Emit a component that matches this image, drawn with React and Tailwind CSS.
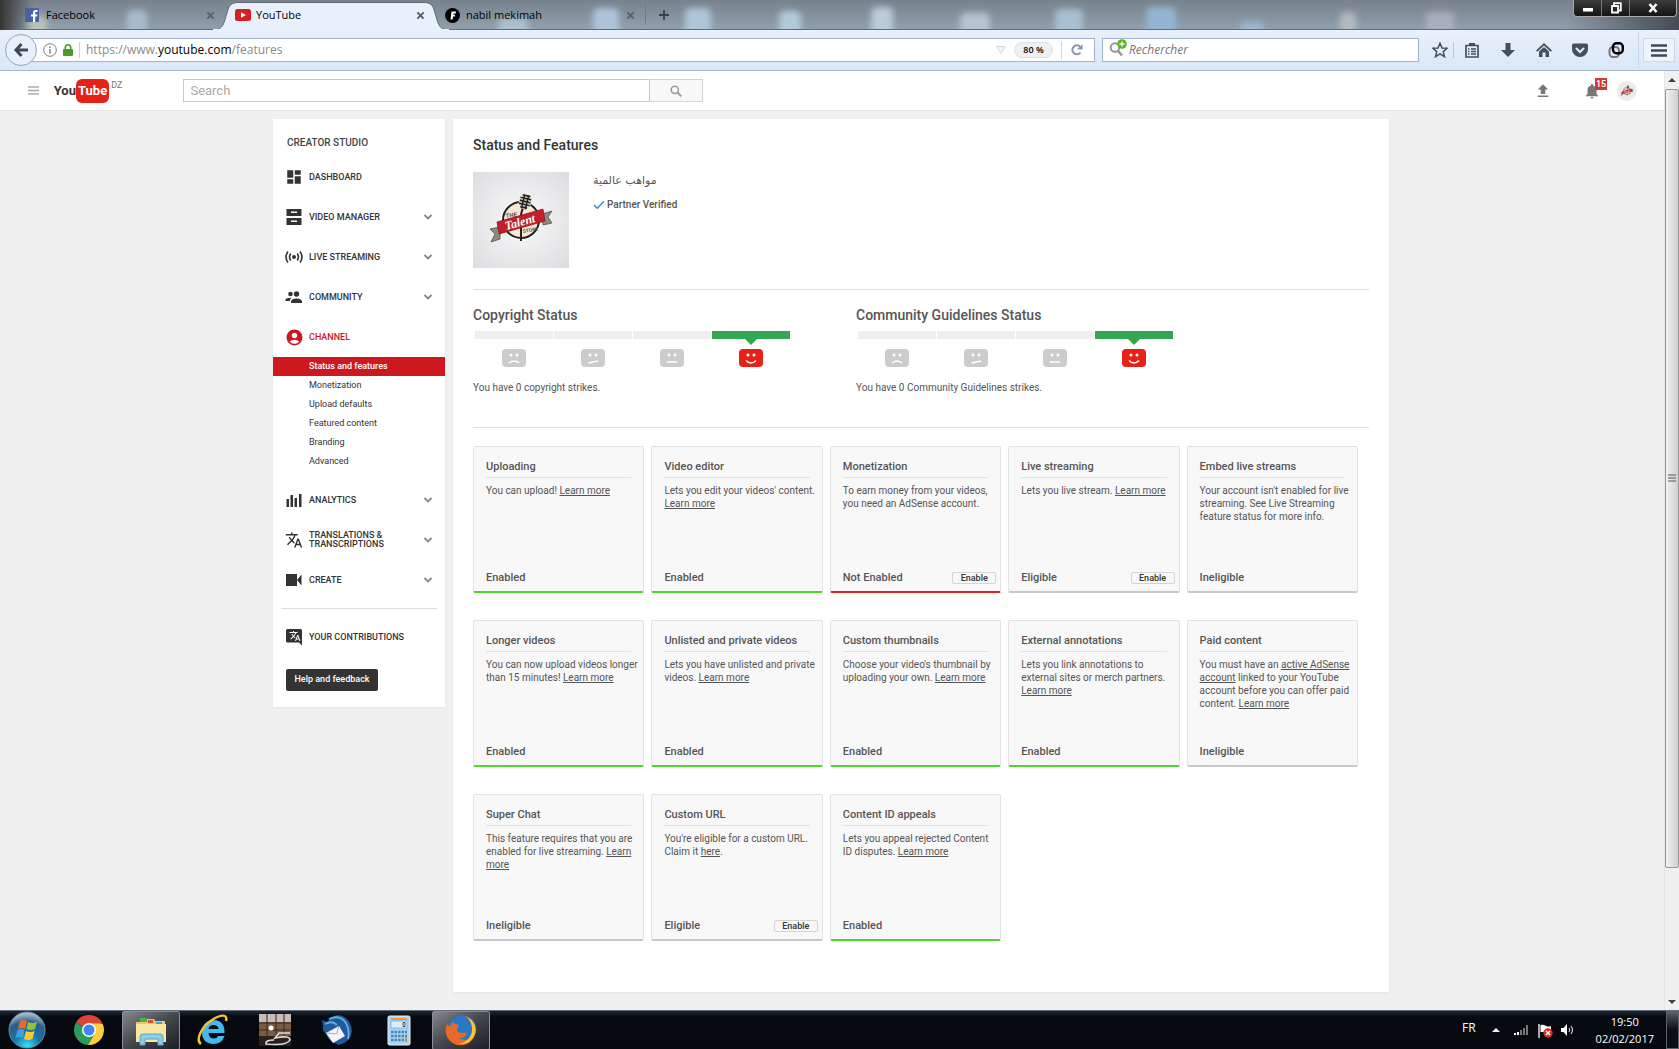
import { MdDashboard, MdPeople, MdAccountCircle, MdTranslate, MdFileUpload, MdNotifications } from 'react-icons/md'

const cards = [
  { title: 'Uploading', body: ['You can upload! ', ['Learn more']], status: 'Enabled' },
  { title: 'Video editor', body: ["Lets you edit your videos' content. ", ['Learn more']], status: 'Enabled' },
  { title: 'Monetization', body: ['To earn money from your videos, you need an AdSense account.'], status: 'Not Enabled', action: true },
  { title: 'Live streaming', body: ['Lets you live stream. ', ['Learn more']], status: 'Eligible', action: true },
  { title: 'Embed live streams', body: ["Your account isn't enabled for live streaming. See Live Streaming feature status for more info."], status: 'Ineligible' },
  { title: 'Longer videos', body: ['You can now upload videos longer than 15 minutes! ', ['Learn more']], status: 'Enabled' },
  { title: 'Unlisted and private videos', body: ['Lets you have unlisted and private videos. ', ['Learn more']], status: 'Enabled' },
  { title: 'Custom thumbnails', body: ["Choose your video's thumbnail by uploading your own. ", ['Learn more']], status: 'Enabled' },
  { title: 'External annotations', body: ['Lets you link annotations to external sites or merch partners. ', ['Learn more']], status: 'Enabled' },
  { title: 'Paid content', body: ['You must have an ', ['active AdSense account'], ' linked to your YouTube account before you can offer paid content. ', ['Learn more']], status: 'Ineligible' },
  { title: 'Super Chat', body: ['This feature requires that you are enabled for live streaming. ', ['Learn more']], status: 'Ineligible' },
  { title: 'Custom URL', body: ["You're eligible for a custom URL. Claim it ", ['here'], '.'], status: 'Eligible', action: true },
  { title: 'Content ID appeals', body: ['Lets you appeal rejected Content ID disputes. ', ['Learn more']], status: 'Enabled' },
]

const borderColors = {
  Enabled: 'border-b-[#4bd828]',
  'Not Enabled': 'border-b-[#e62117]',
  Eligible: 'border-b-[#c8c8c8]',
  Ineligible: 'border-b-[#c8c8c8]',
}

const subItems = ['Monetization', 'Upload defaults', 'Featured content', 'Branding', 'Advanced']

/* ---------- browser window ---------- */

// Desktop icons seen through the glass title bar
const glassSpots = [
  [36, 16, 22, '#b9c3bd'], [137, 10, 20, '#a9bccb'], [513, 18, 30, '#aebfd0'], [606, 8, 26, '#aec3da'], [698, 8, 26, '#aec6d8'],
  [790, 11, 22, '#b2cad8'], [882, 7, 22, '#bccbd9'], [975, 13, 30, '#b6c4d0'], [1069, 9, 28, '#a9bfd2'],
  [1161, 7, 30, '#92b5d2'], [1252, 22, 24, '#9db6d2'], [1348, 12, 16, '#b4b9bf'], [1440, 12, 28, '#a9afbd'],
]

function CloseX() {
  return (
    <svg viewBox="0 0 10 10" className="size-[9px]">
      <path d="M1.500 1.500L8.500 8.500M8.500 1.500L1.500 8.500" stroke="#56626e" strokeWidth="2.200" />
    </svg>
  )
}

function Tab({ icon, label, active }) {
  return (
    <div className="relative flex h-full w-[210px] items-center pr-2.5 pl-2.5">
      {active && (
        <svg viewBox="0 0 250 30" className="absolute top-0 -left-5 h-[30px] w-[250px]">
          <path d="M8 30C19 30 19 22 22 13C24 5 26 2.500 34 2.500H218C226 2.500 228 5 230 13C233 22 233 30 244 30Z" fill="#e8f1fb" stroke="#5f6c79" />
          <path d="M8 30H244" stroke="#e8f1fb" strokeWidth="2" />
        </svg>
      )}
      <span className="relative flex w-[21px] shrink-0">{icon}</span>
      <span className="relative">{label}</span>
      <button aria-label="Close tab" className="relative ml-auto"><CloseX /></button>
    </div>
  )
}

function TabStrip() {
  return (
    <div className="relative flex h-[30px] items-center overflow-hidden bg-linear-to-b from-[#77828d] to-[#92a0ad] pl-[15px] font-['Open_Sans',sans-serif] text-[11px] text-black">
      <svg className="absolute inset-0 h-full w-full">
        <defs>
          <filter id="glass" x="-50%" y="-50%" width="200%" height="200%"><feGaussianBlur stdDeviation="3" /></filter>
          <linearGradient id="edge"><stop offset="0" stopColor="#333" /><stop offset="1" stopColor="#333" stopOpacity="0" /></linearGradient>
        </defs>
        {glassSpots.map(([x, y, w, fill]) => (
          <rect key={x} x={x - w / 2} y={y} width={w} height="30" rx="6" fill={fill} filter="url(#glass)" />
        ))}
        <rect width="34" height="30" fill="url(#edge)" />
      </svg>
      <div className="absolute bottom-0 h-px w-full bg-[#5f6c79]" />
      <Tab
        label="Facebook"
        icon={
          <svg viewBox="0 0 14 14" className="size-3.5">
            <rect width="14" height="14" fill="#4862a3" />
            <path d="M8 14V8.500H6V6.500H8V5C8 3 9 2 11 2H12.500V4H11.200C10.400 4 10.200 4.400 10.200 5V6.500H12.400L12 8.500H10.200V14Z" fill="#fff" />
          </svg>
        }
      />
      <Tab
        active
        label="YouTube"
        icon={
          <svg viewBox="0 0 16 12" className="h-3 w-4">
            <rect width="16" height="12" rx="2.500" fill="#d5201f" />
            <path d="M6 3.300L11 6L6 8.700Z" fill="#fff" />
          </svg>
        }
      />
      <Tab
        label="nabil mekimah"
        icon={
          <svg viewBox="0 0 15 15" className="size-[15px]">
            <circle cx="7.500" cy="7.500" r="7.500" fill="#000" />
            <path d="M5.500 11.500L6.500 3.500H11L10.700 5.500H8.500L8.300 6.700H10.200L9.900 8.400H8L7.600 11.500Z" fill="#fff" />
          </svg>
        }
      />
      <div className="relative h-5 w-px bg-[#6f7b87]" />
      <button aria-label="New tab" className="relative ml-3">
        <svg viewBox="0 0 12 12" className="size-3"><path d="M6 1V11M1 6H11" stroke="#35424e" strokeWidth="1.800" /></svg>
      </button>
      <div className="absolute top-0 right-0 h-full w-28 bg-linear-to-r from-transparent to-[#444b52]" />
      <div className="relative mr-0.5 mb-auto ml-auto flex h-[17px] divide-x divide-[#777] overflow-hidden rounded-b border border-t-0 border-[#aaa] bg-linear-to-b from-[#3c3c3c] to-[#151515]">
        <button aria-label="Minimize" className="flex w-7 items-center justify-center">
          <svg viewBox="0 0 12 10" className="h-2.5 w-3"><rect x="1" y="5" width="10" height="3.500" fill="#fff" /></svg>
        </button>
        <button aria-label="Restore" className="flex w-7 items-center justify-center">
          <svg viewBox="0 0 12 12" className="size-3"><path d="M4 3V1.200H10.800V8.500H9M2 4H8V10.500H2Z" fill="none" stroke="#fff" strokeWidth="1.800" /></svg>
        </button>
        <button aria-label="Close" className="flex w-[46px] items-center justify-center">
          <svg viewBox="0 0 10 10" className="size-2.5"><path d="M1.500 1L8.500 9M8.500 1L1.500 9" stroke="#fff" strokeWidth="2.600" /></svg>
        </button>
      </div>
    </div>
  )
}

function ToolButton({ label, children }) {
  return (
    <button aria-label={label} className="flex w-9 justify-center">
      <svg viewBox="0 0 16 16" className="size-4">{children}</svg>
    </button>
  )
}

function NavBar() {
  return (
    <div className="relative flex h-[41px] items-center border-b border-[#a3b6cd] bg-linear-to-b from-[#e8f1fb] to-[#d9e7f8] pr-1 font-['Open_Sans',sans-serif] text-[12px]">
      <button aria-label="Back" className="relative z-10 ml-[5px] flex size-8 shrink-0 items-center justify-center rounded-full border border-[#93a8c0] bg-[#e7f0fb]">
        <svg viewBox="0 0 16 16" className="size-4"><path d="M8.500 2L3 8L8.500 14M3.500 8H15" fill="none" stroke="#404a55" strokeWidth="3" /></svg>
      </button>
      <div className="relative -ml-2 flex h-6 flex-1 items-center border border-[#9fb4cc] bg-white pl-[13px]">
        <svg viewBox="0 0 14 14" className="size-3.5">
          <circle cx="7" cy="7" r="6.300" fill="none" stroke="#7a7a7a" />
          <path d="M7 6V10.500M7 3.500V5" stroke="#7a7a7a" strokeWidth="1.400" />
        </svg>
        <svg viewBox="0 0 10 12" className="ml-1.5 h-3 w-2.5">
          <rect y="5" width="10" height="7" rx="1" fill="#4c9a2a" />
          <path d="M2.300 5.500V3.500A2.700 2.700 0 0 1 7.700 3.500V5.500" fill="none" stroke="#4c9a2a" strokeWidth="1.600" />
        </svg>
        <div className="mx-1.5 h-4 w-px bg-[#d0d0d0]" />
        <div className="text-[#8a8a8a]">https://www.<span className="text-black">youtube.com</span>/features</div>
        <input aria-label="Address" className="absolute inset-y-0 left-10 w-2/3 bg-transparent outline-none" />
        <svg viewBox="0 0 10 8" className="mr-2 ml-auto h-2 w-2.5"><path d="M.5 .5H9.500L5 7.500Z" fill="#f1f3f5" stroke="#d7dce1" /></svg>
        <button className="h-4 w-[39px] rounded-full border border-[#e2e2e2] bg-[#f0f0f0] text-[9px] leading-[14px] font-semibold text-black">80 %</button>
        <div className="mx-2 h-[18px] w-px bg-[#ccd5df]" />
        <button aria-label="Reload" className="mr-2.5">
          <svg viewBox="0 0 14 14" className="size-3.5">
            <path d="M10.500 9.500A4.500 4.500 0 1 1 10 3.600" fill="none" stroke="#8795a5" strokeWidth="2" />
            <path d="M12.500 1V6.500H7Z" fill="#8795a5" />
          </svg>
        </button>
      </div>
      <div className="ml-[7px] flex h-6 w-[317px] items-center border border-[#9fb4cc] bg-white pl-1.5">
        <svg viewBox="0 0 18 18" className="mb-1 size-[18px]">
          <circle cx="6" cy="8.500" r="4.300" fill="none" stroke="#989898" strokeWidth="2" />
          <path d="M9 12L13 16.500" stroke="#989898" strokeWidth="2.600" />
          <circle cx="13" cy="5" r="4.800" fill="#58b823" />
          <path d="M13 2.500V7.500M10.500 5H15.500" stroke="#fff" strokeWidth="1.300" />
        </svg>
        <input aria-label="Rechercher" placeholder="Rechercher" className="min-w-0 flex-1 pl-0.5 italic outline-none placeholder:text-[#777]" />
      </div>
      <div className="ml-2 flex items-center">
        <div className="flex w-[26px] justify-center">
          <ToolButton label="Bookmark">
            <path d="M8 1.200L10 6L15.200 6.300L11.200 9.600L12.500 14.700L8 11.900L3.500 14.700L4.800 9.600L.8 6.300L6 6Z" fill="none" stroke="#44505c" strokeWidth="1.500" />
          </ToolButton>
        </div>
        <div className="h-4 w-px bg-[#b9c9dc]" />
        <ToolButton label="Bookmarks list">
          <path d="M2 3.500H14V15H2Z" fill="none" stroke="#44505c" strokeWidth="1.700" />
          <path d="M5 1H11V4H5Z" fill="#44505c" />
          <path d="M4 7H5.500M7 7H12M4 9.500H5.500M7 9.500H12M4 12H5.500M7 12H12" stroke="#44505c" strokeWidth="1.300" />
        </ToolButton>
        <ToolButton label="Downloads">
          <path d="M5.500 1H10.500V8H15L8 15L1 8H5.500Z" fill="#44505c" />
        </ToolButton>
        <ToolButton label="Home">
          <path d="M8 1L0 8.500L1.300 9.800L8 3.600L14.700 9.800L16 8.500Z" fill="#44505c" />
          <path d="M3 9.500L8 5L13 9.500V15H9.500V10.500H6.500V15H3Z" fill="#44505c" />
        </ToolButton>
        <ToolButton label="Pocket">
          <path d="M1.500 1.500H14.500Q16 1.500 16 3V7.500A8 7.500 0 0 1 0 7.500V3Q0 1.500 1.500 1.500Z" fill="#44505c" />
          <path d="M4 6L8 10L12 6" fill="none" stroke="#e3edf9" strokeWidth="2" />
        </ToolButton>
        <ToolButton label="Container">
          <rect x="1.500" y="5" width="9.500" height="10" rx="3.500" fill="none" stroke="#777" strokeWidth="2" />
          <rect x="5" y="1.300" width="9.800" height="10" rx="3.500" fill="none" stroke="#000" strokeWidth="2.400" />
        </ToolButton>
        <div className="mx-1 h-9 w-px bg-[#c5d4e6]" />
        <button aria-label="Menu" className="flex h-6 w-8 items-center justify-center border border-[#ccd9e8] bg-[#edf4fc]">
          <svg viewBox="0 0 16 13" className="h-[13px] w-4"><path d="M0 1.500H16M0 6.500H16M0 11.500H16" stroke="#3d4954" strokeWidth="2.400" /></svg>
        </button>
      </div>
    </div>
  )
}

function ScrollBar() {
  return (
    <div className="flex w-[15px] flex-col items-center border-l border-[#e4e4e4] bg-[#f0f0f0]">
      <svg viewBox="0 0 8 4" className="my-[7px] h-1 w-2"><path d="M4 0L8 4H0Z" fill="#444" /></svg>
      <div className="flex w-full flex-[86] items-center justify-center rounded-xs border border-[#979797] bg-linear-to-r from-[#f3f3f3] to-[#cfcfcf]">
        <svg viewBox="0 0 8 8" className="size-2"><path d="M0 1H8M0 4H8M0 7H8" stroke="#555" /></svg>
      </div>
      <div className="flex-[14]" />
      <svg viewBox="0 0 8 4" className="my-1.5 h-1 w-2"><path d="M0 0H8L4 4Z" fill="#444" /></svg>
    </div>
  )
}

/* ---------- page ---------- */

function TalentArt() {
  return (
    <g>
      <circle cx="48" cy="48" r="20" fill="#fff" />
      <circle cx="48" cy="48" r="18" fill="#f8e7d2" stroke="#1f2523" strokeWidth="2" />
      <path d="M51 34Q48 40 48 44V69" fill="none" stroke="#1f2523" strokeWidth="2" />
      <g transform="rotate(14 52 30)">
        <rect x="46" y="22" width="12" height="15" rx="4" fill="#f8e7d2" />
        <path d="M50 23V37M54 23V37" stroke="#1f2523" strokeWidth="1.500" />
        <path d="M48 23.500H56M46.500 26.500H57.500M46.500 29.500H57.500M46.500 32.500H57.500M48.500 35.500H55.500" stroke="#1f2523" strokeWidth="1.700" />
      </g>
      <path d="M17 57L27 55V67L18 70L22 62Z" fill="#8d8b80" stroke="#444" strokeWidth=".7" />
      <path d="M69 42L79 39L75 45L79 51L70 53Z" fill="#8d8b80" stroke="#444" strokeWidth=".7" />
      <text x="33" y="46" transform="rotate(-8 33 46)" fontFamily="Roboto" fontWeight="700" fontSize="6" fill="#555">THE</text>
      <path d="M24 50L70 37L72 49L26 62Z" fill="#c1202b" stroke="#861018" strokeWidth=".7" />
      <text x="33" y="58" transform="rotate(-15 33 58)" fontFamily="Liberation Serif" fontStyle="italic" fontWeight="700" fontSize="12" fill="#fff">Talent</text>
      <text x="50" y="61" transform="rotate(-9 50 61)" fontFamily="Roboto" fontWeight="700" fontSize="5" fill="#555">STORE</text>
    </g>
  )
}

function Header() {
  return (
    <header className="flex h-10 items-center border-b border-[#e2e2e2] bg-white pr-[27px] pl-7">
      <button aria-label="Guide">
        <svg viewBox="0 0 11 9" className="h-[9px] w-[11px]"><path d="M0 1H11M0 4.500H11M0 8H11" stroke="#aaa" strokeWidth="1.300" /></svg>
      </button>
      <a href="#home" aria-label="YouTube home" className="ml-3 flex h-6 items-center font-bold">
        <span className="w-[25px] text-right text-[13px] leading-6 text-[#3a3130]">You</span>
        <span className="rounded-md bg-[#e62117] px-0.5 text-[13px] leading-6 text-white">Tube</span>
        <span className="mb-auto ml-0.5 text-[9px] leading-3 font-normal text-[#777]">DZ</span>
      </a>
      <form className="ml-[61px] flex h-[23px] w-[520px]">
        <input aria-label="Search" placeholder="Search" className="min-w-0 flex-1 border border-[#c8c8c8] bg-white px-1.5 text-[13px] outline-none placeholder:text-[#aaa]" />
        <button type="button" aria-label="Submit search" className="flex w-[53px] items-center justify-center border border-l-0 border-[#d3d3d3] bg-[#f8f8f8]">
          <svg viewBox="0 0 12 12" className="size-3"><circle cx="4.800" cy="4.800" r="3.600" fill="none" stroke="#999" strokeWidth="1.500" /><path d="M7.500 7.500L11.300 11.300" stroke="#999" strokeWidth="1.800" /></svg>
        </button>
      </form>
      <button aria-label="Upload" className="ml-auto text-[#777]"><MdFileUpload className="size-[18px]" /></button>
      <button aria-label="Notifications" className="relative ml-[31px] text-[#777]">
        <MdNotifications className="size-[18px]" />
        <span className="absolute -top-1 left-3 h-3 w-3 bg-[#cc3b34] text-center text-[9px] leading-3 font-medium text-white">15</span>
      </button>
      <button aria-label="Account" className="ml-4">
        <svg viewBox="0 0 96 96" className="size-5 rounded-full bg-[#ececec]"><TalentArt /></svg>
      </button>
    </header>
  )
}

function NavItem({ icon, label, arrow, active }) {
  return (
    <button className={`flex h-10 w-full items-center pr-2.5 pl-3 text-left text-[9px] leading-[9px] font-medium ${active ? 'text-[#cc181e]' : 'text-[#333]'}`}>
      <span className="flex w-6 shrink-0">{icon}</span>
      <span className="w-24">{label}</span>
      {arrow && (
        <svg viewBox="0 0 10 6" className="mr-0.5 ml-auto h-1.5 w-2.5"><path d="M1.500 1L5 4.500L8.500 1" fill="none" stroke="#888" strokeWidth="1.800" /></svg>
      )}
    </button>
  )
}

function Sidebar() {
  return (
    <nav className="w-[172px] shrink-0 self-start bg-white pt-4 pb-4 shadow-xs">
      <h2 className="mb-1.5 pl-3.5 text-[10px] leading-4 font-medium text-[#444]">CREATOR STUDIO</h2>
      <NavItem label="DASHBOARD" icon={<MdDashboard className="size-[18px]" />} />
      <NavItem
        arrow
        label="VIDEO MANAGER"
        icon={
          <svg viewBox="0 0 18 18" className="size-[18px]" fill="currentColor">
            <path d="M1.500 1H16.500V8H1.500ZM1.500 10H16.500V17H1.500Z" />
            <path d="M6 3.500V5H12V3.500M6 12.500V14H12V12.500" fill="#fff" />
          </svg>
        }
      />
      <NavItem
        arrow
        label="LIVE STREAMING"
        icon={
          <svg viewBox="0 0 18 18" className="size-[18px]" fill="none" stroke="currentColor" strokeWidth="1.600">
            <circle cx="9" cy="9" r="2" fill="currentColor" stroke="none" />
            <path d="M5.800 5.500Q3.300 9 5.800 12.500M12.200 5.500Q14.700 9 12.200 12.500M3 3.500Q-1 9 3 14.500M15 3.500Q19 9 15 14.500" />
          </svg>
        }
      />
      <NavItem
        arrow
        label="COMMUNITY"
        icon={
          <svg viewBox="0 0 18 18" className="size-[18px]" fill="currentColor">
            <circle cx="5.500" cy="6" r="2.300" />
            <circle cx="11.500" cy="6" r="2.700" />
            <path d="M6 15V13.500Q6.500 10.500 11.500 10.500Q16.500 10.500 17 13.500V15ZM.5 13V11.700Q1.500 9.500 6.500 9.800Q5 11 4.800 13Z" />
          </svg>
        }
      />
      <NavItem active label="CHANNEL" icon={<MdAccountCircle className="size-[19px]" />} />
      <ul className="mb-[9px] text-[9px] leading-[19px] text-[#333]">
        <li className="bg-[#cc181e] pl-9 font-medium text-white"><a href="#status">Status and features</a></li>
        {subItems.map((item) => (
          <li key={item} className="pl-9"><a href="#item">{item}</a></li>
        ))}
      </ul>
      <NavItem
        arrow
        label="ANALYTICS"
        icon={
          <svg viewBox="0 0 18 18" className="size-[18px]" fill="currentColor">
            <path d="M1.500 8H4V16H1.500ZM5.500 4H8V16H5.500ZM9.500 7H12V16H9.500ZM14 3H16.500V16H14Z" />
          </svg>
        }
      />
      <NavItem arrow label="TRANSLATIONS & TRANSCRIPTIONS" icon={<MdTranslate className="size-[18px]" />} />
      <NavItem
        arrow
        label="CREATE"
        icon={
          <svg viewBox="0 0 18 18" className="size-[18px]" fill="currentColor">
            <path d="M1 3H12V15H1ZM12 9L16.500 3.500V14.500Z" />
          </svg>
        }
      />
      <hr className="mx-2 my-2 border-[#ddd]" />
      <NavItem
        label="YOUR CONTRIBUTIONS"
        icon={
          <span className="relative flex text-white">
            <svg viewBox="0 0 18 18" className="size-[18px]"><path d="M1 2.500Q1 1 2.500 1H15.500Q17 1 17 2.500V17.500L14 14.500H2.500Q1 14.500 1 13Z" fill="#333" /></svg>
            <MdTranslate className="absolute top-0.5 left-1 size-3" />
          </span>
        }
      />
      <button className="mt-3 ml-[13px] block h-[22px] w-[92px] rounded-xs bg-[#333] text-[9px] font-medium text-white">Help and feedback</button>
    </nav>
  )
}

function Face({ mood }) {
  const mouths = {
    sad: 'M7 14Q12 10 17 14',
    unsure: 'M7.500 14L17 12',
    flat: 'M7 13H17',
    happy: 'M7 11.500Q12 16.500 17 11.500',
  }
  return (
    <svg viewBox="0 0 24 18" className="h-[18px] w-6">
      <rect width="24" height="18" rx="4" fill={mood === 'happy' ? '#e62117' : '#ccc'} />
      <circle cx="9" cy="6" r="1.500" fill="#fff" />
      <circle cx="15" cy="6" r="1.500" fill="#fff" />
      <path d={mouths[mood]} fill="none" stroke="#fff" strokeWidth="1.500" />
    </svg>
  )
}

function StatusMeter({ title, text }) {
  return (
    <section className="w-[383px]">
      <h2 className="text-[14px] leading-4 font-medium">{title}</h2>
      <div className="mt-2 ml-0.5 grid w-[315px] grid-cols-4 gap-px">
        {['sad', 'unsure', 'flat', 'happy'].map((mood) => (
          <div key={mood} className="flex flex-col items-center">
            <div className={mood === 'happy' ? 'h-2 w-full bg-[#32a852]' : 'h-2 w-full bg-[#efefef]'} />
            <svg viewBox="0 0 12 6" className="mb-1 h-1.5 w-3">
              {mood === 'happy' && <path d="M0 0H12L6 6Z" fill="#32a852" />}
            </svg>
            <Face mood={mood} />
          </div>
        ))}
      </div>
      <p className="mt-[13px] text-[10px] leading-4">{text}</p>
    </section>
  )
}

function FeatureCard({ title, body, status, action }) {
  return (
    <article className={`flex h-[147px] flex-col rounded-xs border border-b-2 border-[#e2e2e2] bg-[#f8f8f8] pt-[13px] pr-1 pb-1.5 pl-3 ${borderColors[status]}`}>
      <h3 className="mr-2 border-b border-[#e2e2e2] pb-[3px] text-[11px] leading-[14px] font-medium">{title}</h3>
      <p className="pt-1.5 text-[10px] leading-[13px]">
        {body.map((part, i) => (
          Array.isArray(part) ? <a key={i} href="#more" className="underline">{part[0]}</a> : part
        ))}
      </p>
      <div className="mt-auto flex items-center justify-between">
        <span className="text-[11px] leading-[14px] font-medium">{status}</span>
        {action && (
          <button className="h-3 w-11 rounded-xs border border-[#d3d3d3] text-[9px] leading-[10px] font-medium text-[#333]">Enable</button>
        )}
      </div>
    </article>
  )
}

function MainPanel() {
  return (
    <main className="min-w-0 flex-1 bg-white px-5 pt-4 pb-[51px] shadow-xs">
      <h1 className="text-[14px] leading-5 font-medium text-[#333]">Status and Features</h1>
      <div className="mt-[17px] flex">
        <svg viewBox="0 0 96 96" className="size-24">
          <defs>
            <radialGradient id="paper" r=".7"><stop offset="0" stopColor="#fafafa" /><stop offset="1" stopColor="#dcdde0" /></radialGradient>
          </defs>
          <rect width="96" height="96" fill="url(#paper)" />
          <TalentArt />
        </svg>
        <div className="ml-6">
          <p className="text-left font-['DejaVu_Sans',sans-serif] text-[11px] leading-[18px]" dir="rtl">مواهب عالمية</p>
          <p className="mt-[7px] flex items-center text-[10px] leading-4 font-medium">
            <svg viewBox="0 0 12 10" className="mr-0.5 h-2.5 w-3"><path d="M1 5L4.300 8.300L11 1.300" fill="none" stroke="#3b8ad8" strokeWidth="1.500" /></svg>
            Partner Verified
          </p>
        </div>
      </div>
      <hr className="mt-[21px] border-[#e0e0e0]" />
      <div className="mt-[17px] flex">
        <StatusMeter title="Copyright Status" text="You have 0 copyright strikes." />
        <StatusMeter title="Community Guidelines Status" text="You have 0 Community Guidelines strikes." />
      </div>
      <hr className="mt-[31px] border-[#e0e0e0]" />
      <div className="mt-[18px] mr-[11px] grid grid-cols-5 gap-x-[7px] gap-y-[27px]">
        {cards.map((card) => <FeatureCard key={card.title} {...card} />)}
      </div>
    </main>
  )
}

/* ---------- taskbar ---------- */

function TaskButton({ label, open, children }) {
  return (
    <button
      aria-label={label}
      className={`flex h-[39px] w-[58px] items-center justify-center rounded-xs border ${open ? 'border-[#8b8f93] bg-linear-to-br from-[#85898d] via-[#44484c] to-[#1c2024]' : 'border-transparent'}`}
    >
      <svg viewBox="0 0 32 32" className="size-8">{children}</svg>
    </button>
  )
}

function Taskbar() {
  return (
    <footer className="flex h-[39px] items-center border-t border-[#5e6b78] bg-linear-to-b from-[#1d2734] via-[#070b11] via-15% to-[#05080c] font-['Open_Sans',sans-serif] text-white">
      <button aria-label="Start" className="ml-2">
        <svg viewBox="0 0 38 38" className="size-[38px]">
          <defs>
            <radialGradient id="orb" cy=".95" r=".9">
              <stop offset="0" stopColor="#2fe3ff" /><stop offset=".4" stopColor="#1976a8" /><stop offset=".75" stopColor="#2b5d86" /><stop offset="1" stopColor="#a6bccb" />
            </radialGradient>
          </defs>
          <circle cx="19" cy="19" r="18" fill="url(#orb)" stroke="#5f8fae" />
          <path d="M12 10Q15 8 19 10L17 18Q13 16 10 18Z" fill="#ee6a2c" />
          <path d="M20 11Q25 13 29 11L27 18Q23 20 18.500 18Z" fill="#8fc43c" />
          <path d="M9.500 19Q13 17 16.500 19L15 27Q11 25 7.500 27Z" fill="#3f9de0" />
          <path d="M18 20Q22 22 26.500 20L24.500 28Q20 30 16 28Z" fill="#fcc930" />
        </svg>
      </button>
      <div className="ml-3.5 flex gap-1">
        <TaskButton label="Chrome">
          <path d="M16 16L3 8.500A15 15 0 0 1 29 8.500Z" fill="#db4437" />
          <path d="M16 16L3 8.500A15 15 0 0 0 15 31L22 19Z" fill="#2a9d58" />
          <path d="M16 9.500H29.500A15 15 0 0 1 15 31L22 19Z" fill="#ffcd40" />
          <circle cx="16" cy="16" r="7" fill="#fff" />
          <circle cx="16" cy="16" r="5.500" fill="#4285f4" />
        </TaskButton>
        <TaskButton label="Explorer" open>
          <path d="M1 8H10L12 5H19L20 7H30V28H1Z" fill="#e5c96b" />
          <path d="M5 4H12V8H5Z" fill="#4caf50" /><path d="M13 6H18V9H13Z" fill="#d84c3c" /><path d="M21 8H27V11H21Z" fill="#3ba0e6" />
          <path d="M1 10H31V28H1Z" fill="#f7e7a1" />
          <path d="M5 31V23Q5 20 8 20H25Q28 20 28 23V31H23V25H10V31Z" fill="#8ecbe8" stroke="#5da7cc" />
        </TaskButton>
        <TaskButton label="Internet Explorer">
          <path d="M27 19H11.500Q12 24.500 17 24.500Q20 24.500 21 22H27.500Q25 30 16.500 30Q5 29.500 5 18Q6 6.500 16.500 6Q28 6.500 27.500 19ZM11.500 15H21.500Q21 11 16.500 11Q12 11 11.500 15Z" fill="#47b8ee" />
          <path d="M4 30C-2 26 5 12 15 6C24 0 31 0 29 7" fill="none" stroke="#f5c623" strokeWidth="2.400" />
        </TaskButton>
        <TaskButton label="Media library">
          <rect width="32" height="32" fill="#7b5b44" />
          <path d="M0 0H32V8H0Z" fill="#c6beb5" />
          <path d="M0 9H32M0 16H32M8 0V32M17 0V32M25 0V32" stroke="#3b2a20" />
          <circle cx="12" cy="14" r="2.500" fill="#fff" />
          <path d="M0 22H32V32H0Z" fill="#2b211c" />
          <path d="M31 19H20L16 24Q31 21 31 26Q28 32 7 30Q6 26 15 26" fill="none" stroke="#ddd" strokeWidth="1.600" />
        </TaskButton>
        <TaskButton label="Thunderbird">
          <path d="M2 12L1 6L6 8Q10 2 17 1Q30 3 31 17Q30 28 18 31Q8 28 5 20Q1 17 2 12Z" fill="#1f5a9c" />
          <path d="M8 5Q19 0 25 9Q29 16 27 25M4 10Q11 6 16 11" fill="none" stroke="#69aee2" strokeWidth="1.800" />
          <path d="M5 19L18 12L24 22L12 29Z" fill="#f4f5f7" />
          <path d="M5 19L15.500 20L18 12" fill="none" stroke="#a7adb5" />
        </TaskButton>
        <TaskButton label="Calculator">
          <rect x="5" y="2" width="22" height="29" rx="1.500" fill="#a8d4f5" stroke="#e5f3fd" />
          <path d="M8 4H24V6H8Z" fill="#f39b2f" />
          <rect x="8" y="7" width="16" height="7" fill="#dcecf8" stroke="#6d9cc0" strokeWidth=".6" />
          <path d="M20 8.500H22V12.500H20Z" fill="none" stroke="#234" strokeWidth=".8" />
          <path d="M8 18H24M8 22H24M8 26H24" stroke="#4a86b5" strokeWidth="2.500" strokeDasharray="2.500 1" />
          <path d="M22 23H24V28H22Z" fill="#f08a1d" />
        </TaskButton>
        <TaskButton label="Firefox" open>
          <circle cx="17" cy="15" r="14" fill="#2a78c4" />
          <path d="M20 2A15 15 0 1 1 2 10L5 13L7 8Q10 11 14 11L12 15Q12 19 17 19Q21 18 22 20Q19 25 13 24Q23 29 27 20Q29 9 20 2Z" fill="#e8692a" />
          <path d="M22 3Q33 9 30 20Q26 31 14 30Q28 26 27 13Q26 7 22 3Z" fill="#fbc53a" />
        </TaskButton>
      </div>
      <div className="ml-auto flex h-full items-center">
        <span className="pb-1 text-[12px]">FR</span>
        <svg viewBox="0 0 8 4" className="ml-4 h-1 w-2"><path d="M4 0L8 4H0Z" fill="#fff" /></svg>
        <svg viewBox="0 0 14 10" className="ml-3.5 h-2.5 w-3.5">
          <path d="M0 8H2V10H0ZM3 7H5V10H3Z" fill="#fff" />
          <path d="M6 5H8V10H6ZM9 3H11V10H9ZM12 0H14V10H12Z" fill="#777" />
        </svg>
        <svg viewBox="0 0 15 15" className="ml-2.5 size-[15px]">
          <path d="M1 1V15" stroke="#fff" strokeWidth="1.300" />
          <path d="M2.500 2Q5 1 8 3Q11 4 13 3V9H2.500Z" fill="#fff" />
          <circle cx="10" cy="10" r="4.700" fill="#d92c23" />
          <path d="M8 8L12 12M12 8L8 12" stroke="#fff" strokeWidth="1.500" />
        </svg>
        <svg viewBox="0 0 15 14" className="ml-2 h-3.5 w-[15px]">
          <path d="M0 5H2.500L6 1V13L2.500 9H0Z" fill="#fff" />
          <path d="M8 5Q9.500 7 8 9M10 3Q13 7 10 11" fill="none" stroke="#ddd" strokeWidth="1.100" />
        </svg>
        <div className="ml-5 text-center text-[11px] leading-[17px]">
          <div>19:50</div>
          <div>02/02/2017</div>
        </div>
        <button aria-label="Show desktop" className="ml-3 h-full w-[13px] border border-[#5b6268] bg-linear-to-b from-[#5b6065] to-[#0b0e12] to-50%" />
      </div>
    </footer>
  )
}

export default function App() {
  return (
    <div className="flex min-h-screen flex-col bg-[#f0f0f0] font-[Roboto,sans-serif] text-[#555]">
      <TabStrip />
      <NavBar />
      <div className="flex flex-1">
        <div className="min-w-0 flex-1">
          <Header />
          <div className="mx-auto mt-2 flex max-w-[1118px] gap-2 pr-0.5">
            <Sidebar />
            <MainPanel />
          </div>
        </div>
        <ScrollBar />
      </div>
      <Taskbar />
    </div>
  )
}
